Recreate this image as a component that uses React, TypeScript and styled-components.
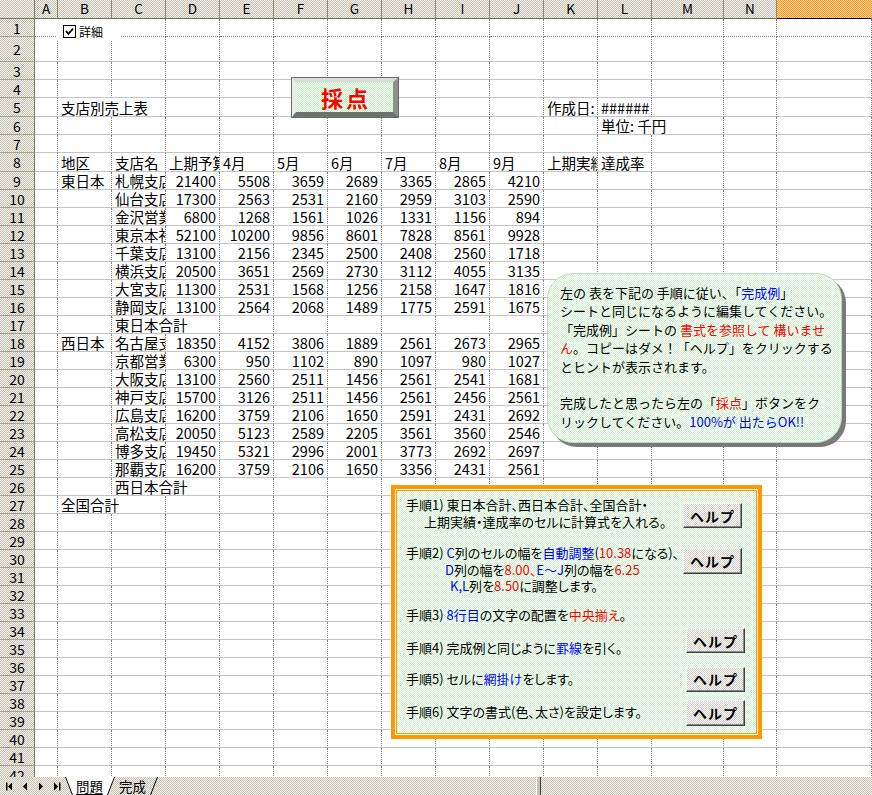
import styled, { createGlobalStyle, css } from "styled-components";

const FONT = `"Noto Sans CJK JP", "Noto Sans", sans-serif`;

const checker = (a: string, b: string) => css`
  background-color: ${a};
  background-image: repeating-conic-gradient(${a} 0 25%, ${b} 0 50%);
  background-size: 2px 2px;
`;

const GlobalStyle = createGlobalStyle`
  html, body { margin: 0; padding: 0; background: #fff; overflow: hidden; }
  body { font-family: ${FONT}; color: #000; }
`;

// column widths A..O
const COL_W = [23, 54, 54, 54, 54, 54, 54, 54, 54, 54, 54, 54, 72, 53, 95];
const LETTERS = "ABCDEFGHIJKLMNO".split("");
const ROWS = Array.from({ length: 42 }, (_, i) => i + 1);
const rowH = (r: number) => (r === 2 ? 25 : r === 5 || r === 8 ? 19 : 18);

type CellData = { text: string; num?: boolean; spill?: boolean };
const sheet: Record<number, Record<string, CellData>> = {};
const put = (row: number, col: string, text: string | number, spill = false) => {
  sheet[row] = sheet[row] || {};
  sheet[row][col] = { text: String(text), num: typeof text === "number", spill };
};

put(5, "B", "支店別売上表", true);
put(5, "K", "作成日:");
put(5, "L", "######");
put(6, "L", "単位: 千円", true);
["地区", "支店名", "上期予算", "4月", "5月", "6月", "7月", "8月", "9月", "上期実績", "達成率"].forEach(
  (t, i) => put(8, LETTERS[i + 1], t)
);

const east: (string | number)[][] = [
  ["札幌支店", 21400, 5508, 3659, 2689, 3365, 2865, 4210],
  ["仙台支店", 17300, 2563, 2531, 2160, 2959, 3103, 2590],
  ["金沢営業所", 6800, 1268, 1561, 1026, 1331, 1156, 894],
  ["東京本社", 52100, 10200, 9856, 8601, 7828, 8561, 9928],
  ["千葉支店", 13100, 2156, 2345, 2500, 2408, 2560, 1718],
  ["横浜支店", 20500, 3651, 2569, 2730, 3112, 4055, 3135],
  ["大宮支店", 11300, 2531, 1568, 1256, 2158, 1647, 1816],
  ["静岡支店", 13100, 2564, 2068, 1489, 1775, 2591, 1675],
];
const west: (string | number)[][] = [
  ["名古屋支店", 18350, 4152, 3806, 1889, 2561, 2673, 2965],
  ["京都営業所", 6300, 950, 1102, 890, 1097, 980, 1027],
  ["大阪支店", 13100, 2560, 2511, 1456, 2561, 2541, 1681],
  ["神戸支店", 15700, 3126, 2511, 1456, 2561, 2456, 2561],
  ["広島支店", 16200, 3759, 2106, 1650, 2591, 2431, 2692],
  ["高松支店", 20050, 5123, 2589, 2205, 3561, 3560, 2546],
  ["博多支店", 19450, 5321, 2996, 2001, 3773, 2692, 2697],
  ["那覇支店", 16200, 3759, 2106, 1650, 3356, 2431, 2561],
];
const fill = (start: number, region: string, list: (string | number)[][]) =>
  list.forEach((r, i) => {
    if (i === 0) put(start, "B", region);
    r.forEach((v, j) => put(start + i, LETTERS[j + 2], v));
  });
fill(9, "東日本", east);
put(17, "C", "東日本合計", true);
fill(18, "西日本", west);
put(26, "C", "西日本合計", true);
put(27, "B", "全国合計", true);

const Sheet = styled.div`
  width: 872px;
  height: 795px;
  display: flex;
  flex-direction: column;
  overflow: hidden;
  font-family: ${FONT};
`;

const GridArea = styled.div`
  position: relative;
  flex: none;
  height: 777px;
  overflow: hidden;
`;

const SheetGrid = styled.div`
  display: grid;
  grid-template-columns: 35px ${COL_W.map((w) => w + "px").join(" ")};
  grid-template-rows: 19px ${ROWS.map((r) => rowH(r) + "px").join(" ")};
`;

const HeadBase = css`
  box-sizing: border-box;
  display: flex;
  align-items: center;
  justify-content: center;
  font-size: 13.5px;
  line-height: 1;
  ${checker("#c6c2b6", "#f5f3ee")};
`;

const Corner = styled.div`
  ${HeadBase};
  border-right: 1px solid #7c7c66;
  border-bottom: 1px solid #6f6f5a;
`;

const ColHead = styled.div<{ $selected?: boolean }>`
  ${HeadBase};
  ${(p) => p.$selected && checker("#ff9a2a", "#ffd79a")};
  border-right: 1px solid ${(p) => (p.$selected ? "transparent" : "#8c8c74")};
  border-bottom: 1px solid ${(p) => (p.$selected ? "#00005a" : "#6f6f5a")};
`;

const RowHead = styled.div`
  ${HeadBase};
  font-size: 14px;
  border-right: 1px solid #7c7c66;
  border-bottom: 1px solid #a4a48c;
`;

const Cell = styled.div<{ $num?: boolean; $spill?: boolean; $dotted?: boolean }>`
  box-sizing: border-box;
  min-width: 0;
  display: flex;
  align-items: center;
  justify-content: ${(p) => (p.$num ? "flex-end" : "flex-start")};
  padding: 0 3px;
  font-size: 14.5px;
  border-right: ${(p) => (p.$spill ? "1px solid transparent" : "1px dotted #7f7f7f")};
  border-bottom: ${(p) => (p.$dotted ? "1px dotted #7f7f7f" : "1px solid #c4c4c4")};
  overflow: ${(p) => (p.$spill ? "visible" : "hidden")};
  position: relative;
  z-index: ${(p) => (p.$spill ? 1 : 0)};
`;

const CellText = styled.span`
  flex: none;
  white-space: nowrap;
  line-height: 17px;
`;

/* ---- form controls lying over the sheet ---- */

const DetailToggle = styled.div`
  position: absolute;
  left: 57px;
  top: 19px;
  width: 64px;
  height: 21px;
  background: #fff;
  display: flex;
  align-items: flex-start;
  gap: 3px;
  padding: 6px 0 0 6px;
  box-sizing: border-box;
  font-size: 12px;
  line-height: 13px;
`;

const ScoreButton = styled.div`
  position: absolute;
  left: 291px;
  top: 77px;
  width: 108px;
  height: 41px;
  box-sizing: border-box;
  border: 1px solid #6a6a6a;
`;

const ScoreFace = styled.div`
  height: 100%;
  box-sizing: border-box;
  border-style: solid;
  border-width: 4px 5px 5px 4px;
  border-color: #d6dcd6 #8b928b #6c736c #eaeeea;
  ${checker("#c2f0c2", "#f6fff6")};
  display: flex;
  align-items: center;
  justify-content: center;
  color: #ff0000;
  font-weight: 700;
  font-size: 22px;
  letter-spacing: 3px;
  padding-left: 3px;
`;

const Bubble = styled.div`
  position: absolute;
  left: 547px;
  top: 273px;
  width: 295px;
  height: 170px;
  box-sizing: border-box;
  border-radius: 26px;
  border: 1px solid #bcdcbc;
  ${checker("#ccf5cc", "#ffffff")};
  box-shadow: 4px 4px 0 #7a7a7a;
  padding: 10px 0 0 12px;
  font-size: 13px;
  line-height: 18.4px;
  white-space: nowrap;
`;

const Blue = styled.span`
  color: #0000ff;
`;
const Red = styled.span`
  color: #ff0000;
`;

const StepsBox = styled.div`
  position: absolute;
  left: 391px;
  top: 485px;
  width: 371px;
  height: 254px;
  box-sizing: border-box;
  border: 4px solid #ff9900;
  box-shadow: inset 0 0 0 1px #fff, inset 0 0 0 2px #ff9900;
  ${checker("#ccf5cc", "#ffffff")};
  padding: 8px 0 0 11px;
  display: flex;
  flex-direction: column;
  font-size: 13px;
  font-feature-settings: "palt";
`;

const Step = styled.div<{ $mt: number; $center?: boolean }>`
  display: flex;
  justify-content: space-between;
  align-items: ${(p) => (p.$center ? "center" : "flex-start")};
  margin-top: ${(p) => p.$mt}px;
`;

const StepText = styled.div<{ $mt?: number }>`
  margin-top: ${(p) => p.$mt || 0}px;
  white-space: nowrap;
`;

const Line = styled.div<{ $indent?: number }>`
  line-height: 16.5px;
  padding-left: ${(p) => p.$indent || 0}px;
`;

const HelpButton = styled.div<{ $mt?: number; $mr: number; $h?: number }>`
  flex: none;
  width: 59px;
  height: ${(p) => p.$h || 25}px;
  margin-top: ${(p) => p.$mt || 0}px;
  margin-right: ${(p) => p.$mr}px;
  box-sizing: border-box;
  ${checker("#d2cec6", "#ffffff")};
  border: 1px solid;
  border-color: #f4f4f4 #404040 #404040 #f4f4f4;
  box-shadow: inset -1px -1px 0 #8a8a8a;
  display: flex;
  align-items: center;
  justify-content: center;
  font-size: 14px;
  font-weight: 700;
  letter-spacing: 1px;
  font-feature-settings: normal;
`;

/* ---- sheet tabs ---- */

const TabBar = styled.div`
  flex: none;
  height: 18px;
  display: flex;
  align-items: stretch;
  ${checker("#c6c2b6", "#f5f3ee")};
`;

const Nav = styled.svg`
  flex: none;
  width: 62px;
  height: 18px;
`;

const TabStrip = styled.div`
  position: relative;
  flex: none;
  width: 100px;
  display: flex;
  align-items: center;
  font-size: 13.5px;
`;

const TabOutline = styled.svg`
  position: absolute;
  inset: 0;
  width: 100px;
  height: 18px;
`;

const TabLabel = styled.span<{ $active?: boolean; $ml: number }>`
  position: relative;
  margin-left: ${(p) => p.$ml}px;
  line-height: 16px;
  text-decoration: ${(p) => (p.$active ? "underline" : "none")};
  text-underline-offset: 2px;
`;

const SplitBox = styled.div`
  flex: none;
  width: 3px;
  margin-left: 374px;
  border-left: 1px solid #fff;
  border-right: 1px solid #404040;
  background: #c6c2b6;
`;

export default function App() {
  return (
    <Sheet>
      <GlobalStyle />
      <GridArea>
        <SheetGrid>
          <Corner />
          {LETTERS.map((l, i) => (
            <ColHead key={l} $selected={i === 14}>
              {i === 14 ? "" : l}
            </ColHead>
          ))}
          {ROWS.map((r) => [
            <RowHead key={"h" + r}>{r}</RowHead>,
            ...LETTERS.map((l) => {
              const c = sheet[r]?.[l];
              return (
                <Cell key={l + r} $num={c?.num} $spill={c?.spill} $dotted={r === 1}>
                  {c && <CellText>{c.text}</CellText>}
                </Cell>
              );
            }),
          ])}
        </SheetGrid>

        <DetailToggle>
          <svg width="13" height="13" viewBox="0 0 13 13">
            <rect x="0.5" y="0.5" width="12" height="12" fill="#fff" stroke="#000" />
            <path d="M3 6.2 L5.4 8.8 L10 3.6" fill="none" stroke="#000" strokeWidth="1.8" />
          </svg>
          <span>詳細</span>
        </DetailToggle>

        <ScoreButton>
          <ScoreFace>採点</ScoreFace>
        </ScoreButton>

        <Bubble>
          <div>
            左の 表を下記の 手順に従い、「<Blue>完成例</Blue>」
          </div>
          <div>シートと同じになるように編集してください。</div>
          <div>
            「完成例」シートの <Red>書式を参照して 構いませ</Red>
          </div>
          <div>
            <Red>ん</Red>。コピーはダメ！「ヘルプ」をクリックする
          </div>
          <div>とヒントが表示されます。</div>
          <div>&nbsp;</div>
          <div>
            完成したと思ったら左の「<Red>採点</Red>」ボタンをク
          </div>
          <div>
            リックしてください。<Blue>100%が 出たらOK!!</Blue>
          </div>
        </Bubble>

        <StepsBox>
          <Step $mt={0}>
            <StepText>
              <Line>手順1) 東日本合計、西日本合計、全国合計・</Line>
              <Line $indent={18}>上期実績・達成率のセルに計算式を入れる。</Line>
            </StepText>
            <HelpButton $mt={6} $mr={16}>
              ヘルプ
            </HelpButton>
          </Step>
          <Step $mt={15}>
            <StepText>
              <Line>
                手順2) <Blue>C</Blue>列のセルの幅を<Blue>自動調整</Blue>(<Red>10.38</Red>になる)、
              </Line>
              <Line $indent={39}>
                <Blue>D</Blue>列の幅を<Red>8.00、</Red>
                <Blue>E～J</Blue>列の幅を<Red>6.25</Red>
              </Line>
              <Line $indent={44}>
                <Blue>K,L</Blue>列を<Red>8.50</Red>に調整します。
              </Line>
            </StepText>
            <HelpButton $mt={3} $mr={16} $h={26}>
              ヘルプ
            </HelpButton>
          </Step>
          <Step $mt={12}>
            <StepText>
              <Line>
                手順3) <Blue>8行目</Blue>の文字の配置を<Red>中央揃え</Red>。
              </Line>
            </StepText>
          </Step>
          <Step $mt={5}>
            <StepText $mt={12}>
              <Line>
                手順4) 完成例と同じように<Blue>罫線</Blue>を引く。
              </Line>
            </StepText>
            <HelpButton $mr={13}>ヘルプ</HelpButton>
          </Step>
          <Step $mt={10} $center>
            <StepText>
              <Line>
                手順5) セルに<Blue>網掛け</Blue>をします。
              </Line>
            </StepText>
            <HelpButton $mr={13}>ヘルプ</HelpButton>
          </Step>
          <Step $mt={8} $center>
            <StepText>
              <Line>手順6) 文字の書式(色、太さ)を設定します。</Line>
            </StepText>
            <HelpButton $mr={13} $h={26}>
              ヘルプ
            </HelpButton>
          </Step>
        </StepsBox>
      </GridArea>

      <TabBar>
        <Nav viewBox="0 0 62 18">
          <rect x="6" y="5.5" width="1.5" height="8" fill="#000" />
          <polygon points="12,5.5 12,13.5 8,9.5" fill="#000" />
          <polygon points="27,5.5 27,13.5 23,9.5" fill="#000" />
          <polygon points="39,5.5 39,13.5 43,9.5" fill="#000" />
          <polygon points="54,5.5 54,13.5 58,9.5" fill="#000" />
          <rect x="59" y="5.5" width="1.5" height="8" fill="#000" />
        </Nav>
        <TabStrip>
          <TabOutline viewBox="0 0 100 18">
            <polygon points="3,0 10,18 46,18 53,0" fill="#fff" />
            <path d="M3.5 0 L10.5 18 M45.5 18 L52.5 0 M88.5 18 L95.5 0" stroke="#000" fill="none" />
          </TabOutline>
          <TabLabel $active $ml={14}>
            問題
          </TabLabel>
          <TabLabel $ml={16}>完成</TabLabel>
        </TabStrip>
        <SplitBox />
      </TabBar>
    </Sheet>
  );
}
